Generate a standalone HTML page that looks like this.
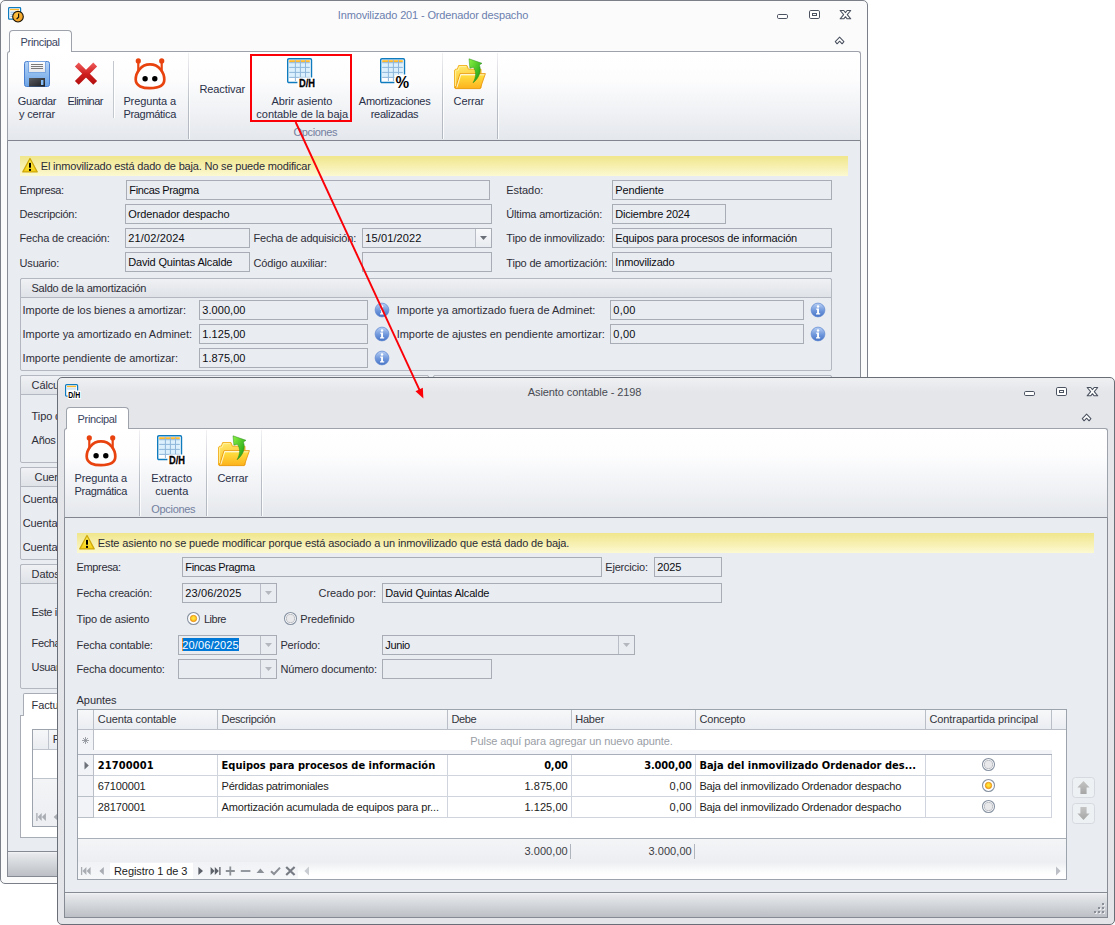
<!DOCTYPE html>
<html lang="es"><head><meta charset="utf-8"><title>Inmovilizado 201 - Ordenador despacho</title>
<style>
html,body{margin:0;padding:0;background:#fff;}
body{width:1115px;height:925px;position:relative;overflow:hidden;font-family:"Liberation Sans", sans-serif;font-size:11px;color:#222;}
.b{position:absolute;box-sizing:border-box;}
.t{position:absolute;white-space:pre;line-height:13px;height:13px;}
.tb{font-family:"DejaVu Sans Condensed", "Liberation Sans", sans-serif;font-weight:bold;}
svg{position:absolute;overflow:visible;}
</style></head><body>
<section id="win-inmovilizado" aria-label="Inmovilizado 201 - Ordenador despacho">
<div class="b" style="left:0px;top:0px;width:868px;height:884px;background:#fbfbfc;border:1px solid #7b8088;border-radius:5px;"></div>
<svg style="left:8px;top:7px" width="17" height="16" viewBox="0 0 17 16"><defs><radialGradient id="g1" cx="0.4" cy="0.35" r="0.7"><stop offset="0" stop-color="#ffc648"/><stop offset="1" stop-color="#f09a1c"/></radialGradient></defs>
<rect x="0.6" y="0.6" width="12" height="11.6" rx="0.8" fill="#fff" stroke="#0f7bbf" stroke-width="1.2"/>
<rect x="2" y="1.9" width="9.2" height="1.3" fill="#fdb92c"/><path d="M2.4 5.2H8M2.4 7.2H6M2.4 9.3H5" stroke="#7fb2e4" stroke-width="1"/>
<circle cx="10" cy="9.7" r="5.3" fill="url(#g1)" stroke="#1a1408" stroke-width="1.1"/>
<path d="M10.6 6.4V10.2L8.6 12" stroke="#1a1408" stroke-width="1.2" fill="none"/></svg>
<span class="t" style="left:337.80px;top:9px;letter-spacing:-0.143px;color:#6b7fae;">Inmovilizado 201 - Ordenador despacho</span>
<svg style="left:777px;top:10px" width="76" height="36" viewBox="0 0 76 36"><g fill="#fff" stroke="#4b5260" stroke-width="1">
<rect x="0.5" y="4.5" width="10" height="4" rx="1.2"/>
<rect x="32.5" y="0.5" width="10" height="8" rx="1.3"/><rect x="35.5" y="3.5" width="4" height="2"/></g>
<path d="M63.15 0.50L66.75 0.50L68.45 2.60L70.15 0.50L73.75 0.50L70.25 4.65L73.75 8.80L70.15 8.80L68.45 6.70L66.75 8.80L63.15 8.80L66.65 4.65Z" fill="#fff" stroke="#4b5260" stroke-width="1.05" stroke-linejoin="round"/>
<path d="M58.30 31.60L62.60 27.10L66.90 31.60L65.10 33.80L62.60 31.20L60.10 33.80Z" fill="#fff" stroke="#4b5260" stroke-width="1.05" stroke-linejoin="round"/></svg>
<div class="b" style="left:7px;top:51px;width:854px;height:90px;background:linear-gradient(#ffffff 0%,#fdfdfe 30%,#eff1f4 70%,#e4e7ec 100%);border:1px solid #9da2ab;border-radius:3px 3px 0 0;border-bottom-color:#80858e;"></div>
<div class="b" style="left:7px;top:141px;width:854px;height:710px;background:#e9ecf1;border:1px solid #878c95;border-top:none;border-bottom:none;"></div>
<div class="b" style="left:9px;top:30px;width:63px;height:22px;background:linear-gradient(#fdfdfe,#ffffff);border:1px solid #9da2ab;border-radius:4px 4px 0 0;border-bottom:none;"></div>
<span class="t" style="left:20.60px;top:36px;letter-spacing:-0.354px;color:#3a4560;">Principal</span>
<div class="b" style="left:7px;top:851px;width:854px;height:26px;background:linear-gradient(#f3f4f6 0px,#e6e8eb 2px,#d5d8dc 45%,#bcc0c6 100%);border:1px solid #858a93;"></div>
<svg style="left:24px;top:61px" width="26" height="26" viewBox="0 0 26 26"><defs><linearGradient id="g2" x1="0" y1="0" x2="0" y2="1"><stop offset="0" stop-color="#b4d3f6"/><stop offset="1" stop-color="#6ba3e6"/></linearGradient>
<linearGradient id="g3" x1="0" y1="0" x2="0" y2="1"><stop offset="0" stop-color="#ffffff"/><stop offset="1" stop-color="#e4e6ea"/></linearGradient>
<linearGradient id="g4" x1="0" y1="0" x2="1" y2="1"><stop offset="0" stop-color="#5a5d63"/><stop offset="1" stop-color="#1d1e21"/></linearGradient></defs>
<rect x="0.5" y="0.5" width="25" height="25" rx="2" fill="url(#g2)" stroke="#4a80cf"/>
<rect x="4.5" y="0.5" width="17" height="11" fill="url(#g3)" stroke="#7aa6e2"/>
<path d="M7 3.5H19M7 5.5H19M7 7.5H19" stroke="#5a5a5a" stroke-width="0.8"/>
<rect x="5" y="17" width="16" height="8.6" fill="url(#g4)"/>
<rect x="17" y="19" width="2.4" height="5" fill="#86bdf7"/></svg>
<span class="t" style="left:17.75px;top:95px;letter-spacing:-0.266px;color:#2a3048;">Guardar</span>
<span class="t" style="left:19.00px;top:108px;letter-spacing:-0.160px;color:#2a3048;">y cerrar</span>
<svg style="left:75px;top:63px" width="22" height="22" viewBox="0 0 22 22"><defs><linearGradient id="g5" gradientUnits="userSpaceOnUse" x1="0" y1="0" x2="0" y2="22"><stop offset="0" stop-color="#ee5a5a"/><stop offset="0.5" stop-color="#cf1f1f"/><stop offset="1" stop-color="#b00d0d"/></linearGradient></defs>
<path d="M1.8 1.5L20.2 19.9M20.2 1.5L1.8 19.9" stroke="url(#g5)" stroke-width="5.4" fill="none"/></svg>
<span class="t" style="left:67.60px;top:95px;letter-spacing:-0.567px;color:#2a3048;">Eliminar</span>
<div class="b" style="left:113px;top:61px;width:1px;height:57px;background:#c3c7ce;"></div>
<div class="b" style="left:114px;top:61px;width:1px;height:57px;background:#ffffff;"></div>
<svg style="left:134px;top:58px" width="32" height="32" viewBox="0 0 32 32"><g fill="none" stroke="#e8430f" stroke-width="2.7">
<path d="M16 6.4C25 6.4 30.3 14.5 30.3 21.6C30.3 28.3 23 30.2 16 30.2C9 30.2 1.7 28.3 1.7 21.6C1.7 14.5 7 6.4 16 6.4Z" fill="#fff"/>
<path d="M4.3 3.2V13.5M27.7 3.2V13.5" stroke-width="2.2"/></g>
<circle cx="4.3" cy="2.9" r="2.6" fill="#e8430f"/><circle cx="27.7" cy="2.9" r="2.6" fill="#e8430f"/>
<circle cx="11.1" cy="20.8" r="2.7" fill="#000"/><circle cx="20.8" cy="20.8" r="2.7" fill="#000"/></svg>
<span class="t" style="left:123.40px;top:95px;letter-spacing:-0.123px;color:#2a3048;">Pregunta a</span>
<span class="t" style="left:123.40px;top:108px;letter-spacing:-0.304px;color:#2a3048;">Pragmática</span>
<div class="b" style="left:188px;top:53px;width:1px;height:86px;background:linear-gradient(rgba(160,165,175,0.15),#b9bdc5 60%,#b3b7bf);"></div>
<div class="b" style="left:189px;top:53px;width:1px;height:86px;background:rgba(255,255,255,0.8);"></div>
<span class="t" style="left:199.40px;top:83px;letter-spacing:-0.097px;color:#2a3048;">Reactivar</span>
<svg style="left:287px;top:58px" width="32" height="32" viewBox="0 0 32 32"><rect x="0.7" y="0.7" width="23.8" height="23.8" rx="1.2" fill="#fff" stroke="#0f7bbf" stroke-width="1.4"/>
<rect x="2.2" y="4.4" width="20.6" height="14.8" fill="#dbf0fc"/>
<rect x="2.2" y="2.2" width="20.6" height="2" fill="#fdb92c"/>
<path d="M8.4 2.2V23M13.4 2.2V23M18.5 2.2V23M2.2 4.7H22.8M2.2 9.4H22.8M2.2 14.4H22.8M2.2 19.4H22.8" stroke="#8fb6da" stroke-width="1" fill="none"/><rect x="10.4" y="19.6" width="19" height="11" rx="2.5" fill="#fff"/>
<text x="12" y="29.2" font-family="Liberation Sans, sans-serif" font-weight="bold" font-size="11.6" textLength="16" lengthAdjust="spacingAndGlyphs" fill="#000" stroke="#000" stroke-width="0.3">D/H</text></svg>
<span class="t" style="left:271.40px;top:95px;letter-spacing:-0.059px;color:#2a3048;">Abrir asiento</span>
<span class="t" style="left:256.35px;top:108px;letter-spacing:-0.035px;color:#2a3048;">contable de la baja</span>
<svg style="left:380px;top:58px" width="32" height="32" viewBox="0 0 32 32"><rect x="0.7" y="0.7" width="23.8" height="23.8" rx="1.2" fill="#fff" stroke="#0f7bbf" stroke-width="1.4"/>
<rect x="2.2" y="4.4" width="20.6" height="14.8" fill="#dbf0fc"/>
<rect x="2.2" y="2.2" width="20.6" height="2" fill="#fdb92c"/>
<path d="M8.4 2.2V23M13.4 2.2V23M18.5 2.2V23M2.2 4.7H22.8M2.2 9.4H22.8M2.2 14.4H22.8M2.2 19.4H22.8" stroke="#8fb6da" stroke-width="1" fill="none"/><rect x="14.4" y="16.4" width="16" height="15" rx="3" fill="#fff"/>
<text x="15.6" y="29.8" font-family="Liberation Sans, sans-serif" font-weight="bold" font-size="16.5" textLength="13.6" lengthAdjust="spacingAndGlyphs" fill="#000">%</text></svg>
<span class="t" style="left:358.80px;top:95px;letter-spacing:-0.257px;color:#2a3048;">Amortizaciones</span>
<span class="t" style="left:370.65px;top:108px;letter-spacing:-0.244px;color:#2a3048;">realizadas</span>
<span class="t" style="left:293.55px;top:126px;letter-spacing:-0.348px;color:#7380a0;">Opciones</span>
<div class="b" style="left:442px;top:53px;width:1px;height:86px;background:linear-gradient(rgba(160,165,175,0.15),#b9bdc5 60%,#b3b7bf);"></div>
<div class="b" style="left:443px;top:53px;width:1px;height:86px;background:rgba(255,255,255,0.8);"></div>
<svg style="left:454px;top:58px" width="33" height="32" viewBox="0 0 33 32"><defs><linearGradient id="g6" x1="0" y1="0" x2="0.3" y2="1"><stop offset="0" stop-color="#ffec72"/><stop offset="1" stop-color="#fdbb1e"/></linearGradient>
<linearGradient id="g7" x1="0" y1="0" x2="0" y2="1"><stop offset="0" stop-color="#fff8cc"/><stop offset="0.18" stop-color="#ffdb3e"/><stop offset="1" stop-color="#fdb21c"/></linearGradient>
<linearGradient id="g8" x1="0" y1="0" x2="1" y2="1"><stop offset="0" stop-color="#8cf242"/><stop offset="0.6" stop-color="#3cba22"/><stop offset="1" stop-color="#15720e"/></linearGradient></defs>
<path d="M0.6 30V12.2L1.6 11.2H3.4L4.6 7.6H13L14.4 11.2H27V30Z" fill="url(#g6)" stroke="#f0a80f" stroke-width="0.9"/>
<path d="M1.4 30.6L6 15.6H31.4L26.2 30.6Z" fill="url(#g7)" stroke="#ea9a10" stroke-width="0.9"/>
<path d="M2.8 29.6L6.8 16.6H24" fill="none" stroke="#fffbe0" stroke-width="0.9"/><path d="M1.6 28V12.8L2.4 12.2H4.2L5.4 8.6H12.2" fill="none" stroke="#fff6b0" stroke-width="0.8"/>
<path d="M15 0.8L28 5.3L25.4 6.9C27.6 12.5 25.5 20 19 24.8C22.2 19 22.6 13.2 19.2 9.2L15.9 10.2Z" fill="url(#g8)" stroke="#2c8a1c" stroke-width="0.5"/></svg>
<span class="t" style="left:453.55px;top:95px;letter-spacing:-0.112px;color:#2a3048;">Cerrar</span>
<div class="b" style="left:497px;top:53px;width:1px;height:86px;background:linear-gradient(rgba(160,165,175,0.15),#b9bdc5 60%,#b3b7bf);"></div>
<div class="b" style="left:498px;top:53px;width:1px;height:86px;background:rgba(255,255,255,0.8);"></div>
<div class="b" style="left:250px;top:54px;width:102px;height:68px;border:2px solid #fb0007;"></div>
<div class="b" style="left:20px;top:156px;width:828px;height:20px;background:linear-gradient(#f0e68c,#f6efae 50%,#fcf9d2);"></div>
<svg style="left:22px;top:157px" width="16" height="16" viewBox="0 0 16 16"><defs><linearGradient id="g9" x1="0" y1="0" x2="0" y2="1"><stop offset="0" stop-color="#fff562"/><stop offset="1" stop-color="#f6cf12"/></linearGradient></defs>
<path d="M8 1.5L15.2 14.9H0.8Z" fill="url(#g9)" stroke="#cfa80a" stroke-width="1.3" stroke-linejoin="round"/>
<rect x="7" y="5.9" width="2" height="4.8" fill="#000"/><rect x="7" y="11.9" width="2" height="2" fill="#000"/></svg>
<span class="t" style="left:40.80px;top:160px;letter-spacing:-0.180px;color:#2b2b36;">El inmovilizado está dado de baja. No se puede modificar</span>
<span class="t" style="left:19.60px;top:184px;letter-spacing:-0.372px;color:#2e2e38;">Empresa:</span>
<div class="b" style="left:126px;top:180px;width:364px;height:20px;background:#e9ecf1;border:1px solid #a7acb5;"></div>
<span class="t" style="left:129.30px;top:184px;letter-spacing:-0.353px;color:#0c0c12;">Fincas Pragma</span>
<span class="t" style="left:19.60px;top:208px;letter-spacing:-0.261px;color:#2e2e38;">Descripción:</span>
<div class="b" style="left:125px;top:204px;width:367px;height:20px;background:#e9ecf1;border:1px solid #a7acb5;"></div>
<span class="t" style="left:128.30px;top:208px;letter-spacing:-0.120px;color:#0c0c12;">Ordenador despacho</span>
<span class="t" style="left:19.60px;top:232px;letter-spacing:-0.198px;color:#2e2e38;">Fecha de creación:</span>
<div class="b" style="left:125px;top:228px;width:125px;height:20px;background:#e9ecf1;border:1px solid #a7acb5;"></div>
<span class="t" style="left:128.30px;top:232px;letter-spacing:0.154px;color:#0c0c12;">21/02/2024</span>
<span class="t" style="left:253.50px;top:232px;letter-spacing:-0.215px;color:#2e2e38;">Fecha de adquisición:</span>
<div class="b" style="left:362px;top:228px;width:130px;height:20px;background:#e9ecf1;border:1px solid #a7acb5;"></div>
<div class="b" style="left:476px;top:229px;width:15px;height:18px;background:linear-gradient(#f8f9fb,#e8ebef);"></div>
<div class="b" style="left:475px;top:229px;width:1px;height:18px;background:#b9bec6;"></div>
<svg style="left:480px;top:236px" width="7" height="4" viewBox="0 0 7 4"><path d="M0 0H7L3.5 4Z" fill="#6b6f77"/></svg>
<span class="t" style="left:365.30px;top:232px;letter-spacing:0.114px;color:#0c0c12;">15/01/2022</span>
<span class="t" style="left:19.60px;top:257px;letter-spacing:-0.196px;color:#2e2e38;">Usuario:</span>
<div class="b" style="left:125px;top:252px;width:125px;height:20px;background:#e9ecf1;border:1px solid #a7acb5;"></div>
<span class="t" style="left:128.30px;top:256px;letter-spacing:-0.173px;color:#0c0c12;">David Quintas Alcalde</span>
<span class="t" style="left:253.50px;top:257px;letter-spacing:-0.146px;color:#2e2e38;">Código auxiliar:</span>
<div class="b" style="left:362px;top:252px;width:130px;height:20px;background:#e9ecf1;border:1px solid #a7acb5;"></div>
<span class="t" style="left:506.30px;top:184px;letter-spacing:-0.059px;color:#2e2e38;">Estado:</span>
<div class="b" style="left:612px;top:180px;width:220px;height:20px;background:#e9ecf1;border:1px solid #a7acb5;"></div>
<span class="t" style="left:615.30px;top:184px;letter-spacing:-0.127px;color:#0c0c12;">Pendiente</span>
<span class="t" style="left:506.30px;top:208px;letter-spacing:-0.197px;color:#2e2e38;">Última amortización:</span>
<div class="b" style="left:612px;top:204px;width:114px;height:20px;background:#e9ecf1;border:1px solid #a7acb5;"></div>
<span class="t" style="left:615.30px;top:208px;letter-spacing:-0.189px;color:#0c0c12;">Diciembre 2024</span>
<span class="t" style="left:506.30px;top:232px;letter-spacing:-0.206px;color:#2e2e38;">Tipo de inmovilizado:</span>
<div class="b" style="left:612px;top:228px;width:220px;height:20px;background:#e9ecf1;border:1px solid #a7acb5;"></div>
<span class="t" style="left:615.30px;top:232px;letter-spacing:-0.165px;color:#0c0c12;">Equipos para procesos de información</span>
<span class="t" style="left:506.30px;top:257px;letter-spacing:-0.184px;color:#2e2e38;">Tipo de amortización:</span>
<div class="b" style="left:612px;top:252px;width:220px;height:20px;background:#e9ecf1;border:1px solid #a7acb5;"></div>
<span class="t" style="left:615.30px;top:256px;letter-spacing:-0.162px;color:#0c0c12;">Inmovilizado</span>
<div class="b" style="left:20px;top:278px;width:812px;height:93px;background:#e9ecf1;border:1px solid #b3b8c0;border-radius:2px;"></div>
<div class="b" style="left:20px;top:278px;width:812px;height:20px;background:linear-gradient(#eff1f4,#dfe2e7);border:1px solid #b3b8c0;border-radius:2px 2px 0 0;"></div>
<span class="t" style="left:31.50px;top:282px;letter-spacing:-0.240px;color:#2e2e38;">Saldo de la amortización</span>
<span class="t" style="left:22.60px;top:304px;letter-spacing:-0.089px;color:#2e2e38;">Importe de los bienes a amortizar:</span>
<div class="b" style="left:199px;top:300px;width:169px;height:20px;background:#e9ecf1;border:1px solid #a7acb5;"></div>
<span class="t" style="left:202.30px;top:304px;letter-spacing:0.046px;color:#0c0c12;">3.000,00</span>
<span class="t" style="left:22.60px;top:328px;letter-spacing:-0.036px;color:#2e2e38;">Importe ya amortizado en Adminet:</span>
<div class="b" style="left:199px;top:324px;width:169px;height:20px;background:#e9ecf1;border:1px solid #a7acb5;"></div>
<span class="t" style="left:202.30px;top:328px;letter-spacing:0.046px;color:#0c0c12;">1.125,00</span>
<span class="t" style="left:22.60px;top:352px;letter-spacing:-0.017px;color:#2e2e38;">Importe pendiente de amortizar:</span>
<div class="b" style="left:199px;top:348px;width:169px;height:20px;background:#e9ecf1;border:1px solid #a7acb5;"></div>
<span class="t" style="left:202.30px;top:352px;letter-spacing:0.046px;color:#0c0c12;">1.875,00</span>
<svg style="left:374px;top:302px" width="16" height="16" viewBox="0 0 16 16"><defs><linearGradient id="g10" x1="0" y1="0" x2="0" y2="1"><stop offset="0" stop-color="#b9d0f4"/><stop offset="0.55" stop-color="#6f97dc"/><stop offset="1" stop-color="#4673c6"/></linearGradient></defs>
<circle cx="8" cy="8" r="6.9" fill="url(#g10)" stroke="#5f86d0" stroke-width="0.7"/>
<circle cx="8" cy="4.4" r="1.25" fill="#fff"/><path d="M6.2 6.6H9V11.2H10.2V12.4H6V11.2H7.1V7.8H6.2Z" fill="#fff"/></svg>
<svg style="left:374px;top:326px" width="16" height="16" viewBox="0 0 16 16"><defs><linearGradient id="g11" x1="0" y1="0" x2="0" y2="1"><stop offset="0" stop-color="#b9d0f4"/><stop offset="0.55" stop-color="#6f97dc"/><stop offset="1" stop-color="#4673c6"/></linearGradient></defs>
<circle cx="8" cy="8" r="6.9" fill="url(#g11)" stroke="#5f86d0" stroke-width="0.7"/>
<circle cx="8" cy="4.4" r="1.25" fill="#fff"/><path d="M6.2 6.6H9V11.2H10.2V12.4H6V11.2H7.1V7.8H6.2Z" fill="#fff"/></svg>
<svg style="left:374px;top:350px" width="16" height="16" viewBox="0 0 16 16"><defs><linearGradient id="g12" x1="0" y1="0" x2="0" y2="1"><stop offset="0" stop-color="#b9d0f4"/><stop offset="0.55" stop-color="#6f97dc"/><stop offset="1" stop-color="#4673c6"/></linearGradient></defs>
<circle cx="8" cy="8" r="6.9" fill="url(#g12)" stroke="#5f86d0" stroke-width="0.7"/>
<circle cx="8" cy="4.4" r="1.25" fill="#fff"/><path d="M6.2 6.6H9V11.2H10.2V12.4H6V11.2H7.1V7.8H6.2Z" fill="#fff"/></svg>
<span class="t" style="left:396.70px;top:304px;color:#2e2e38;">Importe ya amortizado fuera de Adminet:</span>
<div class="b" style="left:610px;top:300px;width:194px;height:20px;background:#e9ecf1;border:1px solid #a7acb5;"></div>
<span class="t" style="left:613.30px;top:304px;letter-spacing:0.220px;color:#0c0c12;">0,00</span>
<span class="t" style="left:396.70px;top:328px;letter-spacing:-0.024px;color:#2e2e38;">Importe de ajustes en pendiente amortizar:</span>
<div class="b" style="left:610px;top:324px;width:194px;height:20px;background:#e9ecf1;border:1px solid #a7acb5;"></div>
<span class="t" style="left:613.30px;top:328px;letter-spacing:0.220px;color:#0c0c12;">0,00</span>
<svg style="left:810px;top:302px" width="16" height="16" viewBox="0 0 16 16"><defs><linearGradient id="g13" x1="0" y1="0" x2="0" y2="1"><stop offset="0" stop-color="#b9d0f4"/><stop offset="0.55" stop-color="#6f97dc"/><stop offset="1" stop-color="#4673c6"/></linearGradient></defs>
<circle cx="8" cy="8" r="6.9" fill="url(#g13)" stroke="#5f86d0" stroke-width="0.7"/>
<circle cx="8" cy="4.4" r="1.25" fill="#fff"/><path d="M6.2 6.6H9V11.2H10.2V12.4H6V11.2H7.1V7.8H6.2Z" fill="#fff"/></svg>
<svg style="left:810px;top:326px" width="16" height="16" viewBox="0 0 16 16"><defs><linearGradient id="g14" x1="0" y1="0" x2="0" y2="1"><stop offset="0" stop-color="#b9d0f4"/><stop offset="0.55" stop-color="#6f97dc"/><stop offset="1" stop-color="#4673c6"/></linearGradient></defs>
<circle cx="8" cy="8" r="6.9" fill="url(#g14)" stroke="#5f86d0" stroke-width="0.7"/>
<circle cx="8" cy="4.4" r="1.25" fill="#fff"/><path d="M6.2 6.6H9V11.2H10.2V12.4H6V11.2H7.1V7.8H6.2Z" fill="#fff"/></svg>
<div class="b" style="left:20px;top:375px;width:409px;height:88px;background:#e9ecf1;border:1px solid #b3b8c0;border-radius:2px;"></div>
<div class="b" style="left:20px;top:375px;width:409px;height:20px;background:linear-gradient(#eff1f4,#dfe2e7);border:1px solid #b3b8c0;border-radius:2px 2px 0 0;"></div>
<span class="t" style="left:31.60px;top:379px;letter-spacing:-0.124px;color:#2e2e38;">Cálcu</span>
<div class="b" style="left:433px;top:375px;width:399px;height:88px;background:#e9ecf1;border:1px solid #b3b8c0;border-radius:2px;"></div>
<div class="b" style="left:433px;top:375px;width:399px;height:20px;background:linear-gradient(#eff1f4,#dfe2e7);border:1px solid #b3b8c0;border-radius:2px 2px 0 0;"></div>
<span class="t" style="left:31.60px;top:410px;letter-spacing:-0.111px;color:#2e2e38;">Tipo d</span>
<span class="t" style="left:31.60px;top:434px;letter-spacing:-0.270px;color:#2e2e38;">Años</span>
<div class="b" style="left:20px;top:467px;width:812px;height:93px;background:#e9ecf1;border:1px solid #b3b8c0;border-radius:2px;"></div>
<div class="b" style="left:20px;top:467px;width:812px;height:20px;background:linear-gradient(#eff1f4,#dfe2e7);border:1px solid #b3b8c0;border-radius:2px 2px 0 0;"></div>
<span class="t" style="left:34.60px;top:471px;letter-spacing:-0.145px;color:#2e2e38;">Cuen</span>
<span class="t" style="left:22.70px;top:493px;letter-spacing:-0.130px;color:#2e2e38;">Cuenta</span>
<span class="t" style="left:22.70px;top:517px;letter-spacing:-0.130px;color:#2e2e38;">Cuenta</span>
<span class="t" style="left:22.70px;top:541px;letter-spacing:-0.130px;color:#2e2e38;">Cuenta</span>
<div class="b" style="left:20px;top:564px;width:812px;height:125px;background:#e9ecf1;border:1px solid #b3b8c0;border-radius:2px;"></div>
<div class="b" style="left:20px;top:564px;width:812px;height:20px;background:linear-gradient(#eff1f4,#dfe2e7);border:1px solid #b3b8c0;border-radius:2px 2px 0 0;"></div>
<span class="t" style="left:31.60px;top:568px;letter-spacing:-0.127px;color:#2e2e38;">Datos</span>
<span class="t" style="left:31.60px;top:606px;letter-spacing:-0.386px;color:#2e2e38;">Este i</span>
<span class="t" style="left:31.60px;top:637px;letter-spacing:-0.396px;color:#2e2e38;">Fecha</span>
<span class="t" style="left:31.60px;top:661px;letter-spacing:-0.349px;color:#2e2e38;">Usuar</span>
<div class="b" style="left:20px;top:715px;width:812px;height:123px;background:#fff;border:1px solid #a7acb5;"></div>
<div class="b" style="left:23px;top:693px;width:60px;height:23px;background:#fff;border:1px solid #a7acb5;border-radius:2px 2px 0 0;border-bottom:none;"></div>
<span class="t" style="left:31.60px;top:699px;letter-spacing:-0.121px;color:#2e2e38;">Factu</span>
<div class="b" style="left:32px;top:729px;width:790px;height:98px;background:#fff;border:1px solid #9da3ac;"></div>
<div class="b" style="left:33px;top:730px;width:788px;height:20px;background:linear-gradient(#f6f7f9,#e9ecf0);border-bottom:1px solid #bfc4cc;"></div>
<div class="b" style="left:48px;top:730px;width:1px;height:19px;background:#bfc4cc;"></div>
<span class="t" style="left:52.70px;top:733px;letter-spacing:-0.162px;color:#2e2e38;">P</span>
<div class="b" style="left:33px;top:778px;width:788px;height:48px;background:linear-gradient(#f2f4f6,#eceef2);border-top:1px solid #bfc4cc;"></div>
<svg style="left:36px;top:812px" width="22" height="10" viewBox="0 0 22 10"><path d="M0.9 1V9" stroke="#a9adb3" stroke-width="1.3"/><path d="M5.7 1V9L1.7 5ZM9.9 1V9L5.9 5Z" fill="#a9adb3"/><path d="M22 1V9L17.6 5Z" fill="#a9adb3"/></svg>
</section>
<section id="win-asiento" aria-label="Asiento contable - 2198">
<div class="b" style="left:57px;top:377px;width:1058px;height:548px;background:linear-gradient(#eef0f2 0px,#e4e6ea 14px,#e3e5e9 100%);border:1px solid #6a6f77;border-radius:5px;"></div>
<svg style="left:65px;top:384px" width="17" height="16" viewBox="0 0 17 16"><rect x="0.6" y="0.6" width="12" height="11.6" rx="1" fill="#fff" stroke="#0f7bbf" stroke-width="1.2"/>
<rect x="2" y="1.8" width="9.2" height="1.4" fill="#fdb92c"/><rect x="2" y="3.6" width="9.2" height="2.2" fill="#cfe6f8"/>
<rect x="2.6" y="6.6" width="13.4" height="8.6" rx="1.5" fill="#fff"/>
<text x="3.2" y="14.4" font-family="Liberation Sans, sans-serif" font-weight="bold" font-size="8.6" textLength="12" lengthAdjust="spacingAndGlyphs" fill="#000">D/H</text></svg>
<span class="t" style="left:527.80px;top:386px;letter-spacing:-0.091px;color:#484b52;">Asiento contable - 2198</span>
<svg style="left:1024px;top:387px" width="76" height="36" viewBox="0 0 76 36"><g fill="#fff" stroke="#4b5260" stroke-width="1">
<rect x="0.5" y="4.5" width="10" height="4" rx="1.2"/>
<rect x="32.5" y="0.5" width="10" height="8" rx="1.3"/><rect x="35.5" y="3.5" width="4" height="2"/></g>
<path d="M63.15 0.50L66.75 0.50L68.45 2.60L70.15 0.50L73.75 0.50L70.25 4.65L73.75 8.80L70.15 8.80L68.45 6.70L66.75 8.80L63.15 8.80L66.65 4.65Z" fill="#fff" stroke="#4b5260" stroke-width="1.05" stroke-linejoin="round"/>
<path d="M58.30 31.60L62.60 27.10L66.90 31.60L65.10 33.80L62.60 31.20L60.10 33.80Z" fill="#fff" stroke="#4b5260" stroke-width="1.05" stroke-linejoin="round"/></svg>
<div class="b" style="left:64px;top:428px;width:1044px;height:90px;background:linear-gradient(#ffffff 0%,#fdfdfe 30%,#eff1f4 70%,#e4e7ec 100%);border:1px solid #9da2ab;border-radius:3px 3px 0 0;border-bottom-color:#80858e;"></div>
<div class="b" style="left:64px;top:518px;width:1044px;height:374px;background:#e9ecf1;border:1px solid #878c95;border-top:none;border-bottom:none;"></div>
<div class="b" style="left:66px;top:407px;width:63px;height:22px;background:#fff;border:1px solid #9da2ab;border-radius:4px 4px 0 0;border-bottom:none;"></div>
<span class="t" style="left:77.60px;top:413px;letter-spacing:-0.354px;color:#3a4560;">Principal</span>
<div class="b" style="left:64px;top:892px;width:1044px;height:26px;background:linear-gradient(#f3f4f6 0px,#e6e8eb 2px,#d5d8dc 45%,#bcc0c6 100%);border:1px solid #858a93;"></div>
<svg style="left:85px;top:435px" width="32" height="32" viewBox="0 0 32 32"><g fill="none" stroke="#e8430f" stroke-width="2.7">
<path d="M16 6.4C25 6.4 30.3 14.5 30.3 21.6C30.3 28.3 23 30.2 16 30.2C9 30.2 1.7 28.3 1.7 21.6C1.7 14.5 7 6.4 16 6.4Z" fill="#fff"/>
<path d="M4.3 3.2V13.5M27.7 3.2V13.5" stroke-width="2.2"/></g>
<circle cx="4.3" cy="2.9" r="2.6" fill="#e8430f"/><circle cx="27.7" cy="2.9" r="2.6" fill="#e8430f"/>
<circle cx="11.1" cy="20.8" r="2.7" fill="#000"/><circle cx="20.8" cy="20.8" r="2.7" fill="#000"/></svg>
<span class="t" style="left:74.50px;top:472px;letter-spacing:-0.123px;color:#2a3048;">Pregunta a</span>
<span class="t" style="left:74.50px;top:485px;letter-spacing:-0.304px;color:#2a3048;">Pragmática</span>
<div class="b" style="left:139px;top:430px;width:1px;height:86px;background:linear-gradient(rgba(160,165,175,0.15),#b9bdc5 60%,#b3b7bf);"></div>
<div class="b" style="left:140px;top:430px;width:1px;height:86px;background:rgba(255,255,255,0.8);"></div>
<svg style="left:157px;top:435px" width="32" height="32" viewBox="0 0 32 32"><rect x="0.7" y="0.7" width="23.8" height="23.8" rx="1.2" fill="#fff" stroke="#0f7bbf" stroke-width="1.4"/>
<rect x="2.2" y="4.4" width="20.6" height="14.8" fill="#dbf0fc"/>
<rect x="2.2" y="2.2" width="20.6" height="2" fill="#fdb92c"/>
<path d="M8.4 2.2V23M13.4 2.2V23M18.5 2.2V23M2.2 4.7H22.8M2.2 9.4H22.8M2.2 14.4H22.8M2.2 19.4H22.8" stroke="#8fb6da" stroke-width="1" fill="none"/><rect x="10.4" y="19.6" width="19" height="11" rx="2.5" fill="#fff"/>
<text x="12" y="29.2" font-family="Liberation Sans, sans-serif" font-weight="bold" font-size="11.6" textLength="16" lengthAdjust="spacingAndGlyphs" fill="#000" stroke="#000" stroke-width="0.3">D/H</text></svg>
<span class="t" style="left:151.35px;top:472px;letter-spacing:0.068px;color:#2a3048;">Extracto</span>
<span class="t" style="left:155.35px;top:485px;letter-spacing:-0.022px;color:#2a3048;">cuenta</span>
<span class="t" style="left:151.35px;top:503px;letter-spacing:-0.323px;color:#7380a0;">Opciones</span>
<div class="b" style="left:206px;top:430px;width:1px;height:86px;background:linear-gradient(rgba(160,165,175,0.15),#b9bdc5 60%,#b3b7bf);"></div>
<div class="b" style="left:207px;top:430px;width:1px;height:86px;background:rgba(255,255,255,0.8);"></div>
<svg style="left:217.5px;top:435px" width="33" height="32" viewBox="0 0 33 32"><defs><linearGradient id="g15" x1="0" y1="0" x2="0.3" y2="1"><stop offset="0" stop-color="#ffec72"/><stop offset="1" stop-color="#fdbb1e"/></linearGradient>
<linearGradient id="g16" x1="0" y1="0" x2="0" y2="1"><stop offset="0" stop-color="#fff8cc"/><stop offset="0.18" stop-color="#ffdb3e"/><stop offset="1" stop-color="#fdb21c"/></linearGradient>
<linearGradient id="g17" x1="0" y1="0" x2="1" y2="1"><stop offset="0" stop-color="#8cf242"/><stop offset="0.6" stop-color="#3cba22"/><stop offset="1" stop-color="#15720e"/></linearGradient></defs>
<path d="M0.6 30V12.2L1.6 11.2H3.4L4.6 7.6H13L14.4 11.2H27V30Z" fill="url(#g15)" stroke="#f0a80f" stroke-width="0.9"/>
<path d="M1.4 30.6L6 15.6H31.4L26.2 30.6Z" fill="url(#g16)" stroke="#ea9a10" stroke-width="0.9"/>
<path d="M2.8 29.6L6.8 16.6H24" fill="none" stroke="#fffbe0" stroke-width="0.9"/><path d="M1.6 28V12.8L2.4 12.2H4.2L5.4 8.6H12.2" fill="none" stroke="#fff6b0" stroke-width="0.8"/>
<path d="M15 0.8L28 5.3L25.4 6.9C27.6 12.5 25.5 20 19 24.8C22.2 19 22.6 13.2 19.2 9.2L15.9 10.2Z" fill="url(#g17)" stroke="#2c8a1c" stroke-width="0.5"/></svg>
<span class="t" style="left:217.40px;top:472px;letter-spacing:-0.062px;color:#2a3048;">Cerrar</span>
<div class="b" style="left:261px;top:430px;width:1px;height:86px;background:linear-gradient(rgba(160,165,175,0.15),#b9bdc5 60%,#b3b7bf);"></div>
<div class="b" style="left:262px;top:430px;width:1px;height:86px;background:rgba(255,255,255,0.8);"></div>
<div class="b" style="left:77px;top:533px;width:1017px;height:20px;background:linear-gradient(#f0e68c,#f6efae 50%,#fcf9d2);"></div>
<svg style="left:79px;top:534px" width="16" height="16" viewBox="0 0 16 16"><defs><linearGradient id="g18" x1="0" y1="0" x2="0" y2="1"><stop offset="0" stop-color="#fff562"/><stop offset="1" stop-color="#f6cf12"/></linearGradient></defs>
<path d="M8 1.5L15.2 14.9H0.8Z" fill="url(#g18)" stroke="#cfa80a" stroke-width="1.3" stroke-linejoin="round"/>
<rect x="7" y="5.9" width="2" height="4.8" fill="#000"/><rect x="7" y="11.9" width="2" height="2" fill="#000"/></svg>
<span class="t" style="left:97.80px;top:537px;letter-spacing:-0.121px;color:#2b2b36;">Este asiento no se puede modificar porque está asociado a un inmovilizado que está dado de baja.</span>
<span class="t" style="left:76.60px;top:561px;letter-spacing:-0.372px;color:#2e2e38;">Empresa:</span>
<div class="b" style="left:182px;top:557px;width:420px;height:20px;background:#e9ecf1;border:1px solid #a7acb5;"></div>
<span class="t" style="left:185.30px;top:561px;letter-spacing:-0.353px;color:#0c0c12;">Fincas Pragma</span>
<span class="t" style="left:605.30px;top:561px;letter-spacing:-0.212px;color:#2e2e38;">Ejercicio:</span>
<div class="b" style="left:654px;top:557px;width:68px;height:20px;background:#e9ecf1;border:1px solid #a7acb5;"></div>
<span class="t" style="left:657.30px;top:561px;letter-spacing:-0.146px;color:#0c0c12;">2025</span>
<span class="t" style="left:76.60px;top:587px;letter-spacing:-0.184px;color:#2e2e38;">Fecha creación:</span>
<div class="b" style="left:182px;top:583px;width:95px;height:20px;background:#e9ecf1;border:1px solid #a7acb5;"></div>
<div class="b" style="left:260px;top:584px;width:1px;height:18px;background:#b9bec6;"></div>
<svg style="left:265px;top:591px" width="7" height="4" viewBox="0 0 7 4"><path d="M0 0H7L3.5 4Z" fill="#b4b8be"/></svg>
<span class="t" style="left:185.30px;top:587px;letter-spacing:0.114px;color:#0c0c12;">23/06/2025</span>
<span class="t" style="left:318.50px;top:587px;letter-spacing:-0.045px;color:#2e2e38;">Creado por:</span>
<div class="b" style="left:382px;top:583px;width:340px;height:20px;background:#e9ecf1;border:1px solid #a7acb5;"></div>
<span class="t" style="left:385.30px;top:587px;letter-spacing:-0.173px;color:#0c0c12;">David Quintas Alcalde</span>
<span class="t" style="left:76.60px;top:613px;letter-spacing:-0.154px;color:#2e2e38;">Tipo de asiento</span>
<svg style="left:187px;top:612px" width="13" height="13" viewBox="0 0 13 13"><circle cx="6.5" cy="6.5" r="6" fill="#fff" stroke="#8792a2" stroke-width="1.1"/><defs><radialGradient id="g19" cx="0.5" cy="0.45" r="0.55"><stop offset="0" stop-color="#ffec45"/><stop offset="0.55" stop-color="#fdd02a"/><stop offset="1" stop-color="#f39a16"/></radialGradient></defs>
<circle cx="6.5" cy="6.5" r="3.2" fill="url(#g19)" stroke="#e3921a" stroke-width="0.8"/></svg>
<span class="t" style="left:203.90px;top:613px;letter-spacing:-0.474px;color:#2e2e38;">Libre</span>
<svg style="left:284px;top:612px" width="13" height="13" viewBox="0 0 13 13"><circle cx="6.5" cy="6.5" r="6" fill="#fff" stroke="#8792a2" stroke-width="1.1"/><circle cx="6.5" cy="6.5" r="4.1" fill="#e9e9eb" stroke="#b3b7bd" stroke-width="0.9"/></svg>
<span class="t" style="left:300.30px;top:613px;letter-spacing:-0.141px;color:#2e2e38;">Predefinido</span>
<span class="t" style="left:76.60px;top:639px;letter-spacing:-0.139px;color:#2e2e38;">Fecha contable:</span>
<div class="b" style="left:178px;top:635px;width:99px;height:20px;background:#e9ecf1;border:1px solid #a7acb5;"></div>
<div class="b" style="left:260px;top:636px;width:1px;height:18px;background:#b9bec6;"></div>
<svg style="left:265px;top:643px" width="7" height="4" viewBox="0 0 7 4"><path d="M0 0H7L3.5 4Z" fill="#b4b8be"/></svg>
<div class="b" style="left:182px;top:638px;width:57px;height:13px;background:#0078d7;"></div>
<div class="b" style="left:182px;top:638px;width:1px;height:13px;background:#f08a24;"></div>
<span class="t" style="left:182.30px;top:639px;letter-spacing:0.134px;color:#fff;">20/06/2025</span>
<span class="t" style="left:280.50px;top:639px;letter-spacing:-0.262px;color:#2e2e38;">Período:</span>
<div class="b" style="left:382px;top:635px;width:253px;height:20px;background:#e9ecf1;border:1px solid #a7acb5;"></div>
<div class="b" style="left:618px;top:636px;width:1px;height:18px;background:#b9bec6;"></div>
<svg style="left:623px;top:643px" width="7" height="4" viewBox="0 0 7 4"><path d="M0 0H7L3.5 4Z" fill="#b4b8be"/></svg>
<span class="t" style="left:385.30px;top:639px;letter-spacing:-0.339px;color:#0c0c12;">Junio</span>
<span class="t" style="left:76.60px;top:663px;letter-spacing:-0.189px;color:#2e2e38;">Fecha documento:</span>
<div class="b" style="left:178px;top:659px;width:99px;height:20px;background:#e9ecf1;border:1px solid #a7acb5;"></div>
<div class="b" style="left:260px;top:660px;width:1px;height:18px;background:#b9bec6;"></div>
<svg style="left:265px;top:667px" width="7" height="4" viewBox="0 0 7 4"><path d="M0 0H7L3.5 4Z" fill="#b4b8be"/></svg>
<span class="t" style="left:280.50px;top:663px;letter-spacing:-0.198px;color:#2e2e38;">Número documento:</span>
<div class="b" style="left:382px;top:659px;width:110px;height:20px;background:#e9ecf1;border:1px solid #a7acb5;"></div>
<span class="t" style="left:76.60px;top:694px;letter-spacing:-0.068px;color:#2e2e38;">Apuntes</span>
<div class="b" style="left:77px;top:709px;width:990px;height:171px;background:#fff;border:1px solid #9da3ac;"></div>
<div class="b" style="left:78px;top:710px;width:988px;height:20px;background:linear-gradient(#f7f8fa,#eaedf1);border-bottom:1px solid #b9bec7;"></div>
<div class="b" style="left:93px;top:710px;width:1px;height:19px;background:#b9bec7;"></div>
<div class="b" style="left:217px;top:710px;width:1px;height:19px;background:#b9bec7;"></div>
<div class="b" style="left:447px;top:710px;width:1px;height:19px;background:#b9bec7;"></div>
<div class="b" style="left:571px;top:710px;width:1px;height:19px;background:#b9bec7;"></div>
<div class="b" style="left:695px;top:710px;width:1px;height:19px;background:#b9bec7;"></div>
<div class="b" style="left:925px;top:710px;width:1px;height:19px;background:#b9bec7;"></div>
<div class="b" style="left:1051px;top:710px;width:1px;height:19px;background:#b9bec7;"></div>
<span class="t" style="left:97.80px;top:713px;letter-spacing:-0.115px;color:#33343c;">Cuenta contable</span>
<span class="t" style="left:221.60px;top:713px;letter-spacing:-0.352px;color:#33343c;">Descripción</span>
<span class="t" style="left:451.50px;top:713px;letter-spacing:-0.424px;color:#33343c;">Debe</span>
<span class="t" style="left:575.20px;top:713px;letter-spacing:-0.194px;color:#33343c;">Haber</span>
<span class="t" style="left:699.40px;top:713px;letter-spacing:-0.162px;color:#33343c;">Concepto</span>
<span class="t" style="left:929.40px;top:713px;letter-spacing:-0.081px;color:#33343c;">Contrapartida principal</span>
<div class="b" style="left:78px;top:730px;width:16px;height:20px;background:#f1f3f6;border-right:1px solid #b9bec7;"></div>
<svg style="left:82px;top:737px" width="7" height="7" viewBox="0 0 7 7"><path d="M3.5 0V7M0 3.5H7M1 1L6 6M6 1L1 6" stroke="#8a8e96" stroke-width="0.8"/></svg>
<span class="t" style="left:470.25px;top:735px;letter-spacing:-0.090px;color:#9a9ea6;">Pulse aquí para agregar un nuevo apunte.</span>
<div class="b" style="left:78px;top:750px;width:974px;height:4px;background:#f3f4f7;"></div>
<div class="b" style="left:78px;top:754px;width:974px;height:1px;background:#a9afba;"></div>
<div class="b" style="left:78px;top:755px;width:16px;height:21px;background:#f1f3f6;border-right:1px solid #b9bec7;border-bottom:1px solid #b9bec7;"></div>
<div class="b" style="left:94px;top:775px;width:958px;height:1px;background:#d0d4dc;"></div>
<div class="b" style="left:217px;top:755px;width:1px;height:21px;background:#d0d4dc;"></div>
<div class="b" style="left:447px;top:755px;width:1px;height:21px;background:#d0d4dc;"></div>
<div class="b" style="left:571px;top:755px;width:1px;height:21px;background:#d0d4dc;"></div>
<div class="b" style="left:695px;top:755px;width:1px;height:21px;background:#d0d4dc;"></div>
<div class="b" style="left:925px;top:755px;width:1px;height:21px;background:#d0d4dc;"></div>
<div class="b" style="left:1051px;top:755px;width:1px;height:21px;background:#d0d4dc;"></div>
<span class="t tb" style="left:97.80px;top:759px;letter-spacing:0.113px;color:#000;">21700001</span>
<span class="t tb" style="left:221.60px;top:759px;letter-spacing:0.006px;color:#000;">Equipos para procesos de información</span>
<span class="t tb" style="left:544.20px;top:759px;letter-spacing:-0.205px;color:#000;">0,00</span>
<span class="t tb" style="left:644.30px;top:759px;letter-spacing:-0.168px;color:#000;">3.000,00</span>
<span class="t tb" style="left:699.40px;top:759px;letter-spacing:0.008px;color:#000;">Baja del inmovilizado Ordenador des...</span>
<svg style="left:982px;top:758px" width="13" height="13" viewBox="0 0 13 13"><circle cx="6.5" cy="6.5" r="6" fill="#fff" stroke="#8792a2" stroke-width="1.1"/><circle cx="6.5" cy="6.5" r="4.1" fill="#e9e9eb" stroke="#b3b7bd" stroke-width="0.9"/></svg>
<div class="b" style="left:78px;top:776px;width:16px;height:21px;background:#f1f3f6;border-right:1px solid #b9bec7;border-bottom:1px solid #b9bec7;"></div>
<div class="b" style="left:94px;top:796px;width:958px;height:1px;background:#d0d4dc;"></div>
<div class="b" style="left:217px;top:776px;width:1px;height:21px;background:#d0d4dc;"></div>
<div class="b" style="left:447px;top:776px;width:1px;height:21px;background:#d0d4dc;"></div>
<div class="b" style="left:571px;top:776px;width:1px;height:21px;background:#d0d4dc;"></div>
<div class="b" style="left:695px;top:776px;width:1px;height:21px;background:#d0d4dc;"></div>
<div class="b" style="left:925px;top:776px;width:1px;height:21px;background:#d0d4dc;"></div>
<div class="b" style="left:1051px;top:776px;width:1px;height:21px;background:#d0d4dc;"></div>
<span class="t" style="left:97.80px;top:780px;letter-spacing:-0.144px;color:#1c1c22;">67100001</span>
<span class="t" style="left:221.60px;top:780px;letter-spacing:-0.231px;color:#1c1c22;">Pérdidas patrimoniales</span>
<span class="t" style="left:524.40px;top:780px;letter-spacing:0.071px;color:#1c1c22;">1.875,00</span>
<span class="t" style="left:669.60px;top:780px;letter-spacing:0.195px;color:#1c1c22;">0,00</span>
<span class="t" style="left:699.40px;top:780px;letter-spacing:-0.199px;color:#1c1c22;">Baja del inmovilizado Ordenador despacho</span>
<svg style="left:982px;top:779px" width="13" height="13" viewBox="0 0 13 13"><circle cx="6.5" cy="6.5" r="6" fill="#fff" stroke="#8792a2" stroke-width="1.1"/><defs><radialGradient id="g22" cx="0.5" cy="0.45" r="0.55"><stop offset="0" stop-color="#ffec45"/><stop offset="0.55" stop-color="#fdd02a"/><stop offset="1" stop-color="#f39a16"/></radialGradient></defs>
<circle cx="6.5" cy="6.5" r="3.2" fill="url(#g22)" stroke="#e3921a" stroke-width="0.8"/></svg>
<div class="b" style="left:78px;top:797px;width:16px;height:21px;background:#f1f3f6;border-right:1px solid #b9bec7;border-bottom:1px solid #b9bec7;"></div>
<div class="b" style="left:94px;top:817px;width:958px;height:1px;background:#d0d4dc;"></div>
<div class="b" style="left:217px;top:797px;width:1px;height:21px;background:#d0d4dc;"></div>
<div class="b" style="left:447px;top:797px;width:1px;height:21px;background:#d0d4dc;"></div>
<div class="b" style="left:571px;top:797px;width:1px;height:21px;background:#d0d4dc;"></div>
<div class="b" style="left:695px;top:797px;width:1px;height:21px;background:#d0d4dc;"></div>
<div class="b" style="left:925px;top:797px;width:1px;height:21px;background:#d0d4dc;"></div>
<div class="b" style="left:1051px;top:797px;width:1px;height:21px;background:#d0d4dc;"></div>
<span class="t" style="left:97.80px;top:801px;letter-spacing:-0.144px;color:#1c1c22;">28170001</span>
<span class="t" style="left:221.60px;top:801px;letter-spacing:-0.150px;color:#1c1c22;">Amortización acumulada de equipos para pr...</span>
<span class="t" style="left:524.40px;top:801px;letter-spacing:0.071px;color:#1c1c22;">1.125,00</span>
<span class="t" style="left:669.60px;top:801px;letter-spacing:0.195px;color:#1c1c22;">0,00</span>
<span class="t" style="left:699.40px;top:801px;letter-spacing:-0.199px;color:#1c1c22;">Baja del inmovilizado Ordenador despacho</span>
<svg style="left:982px;top:800px" width="13" height="13" viewBox="0 0 13 13"><circle cx="6.5" cy="6.5" r="6" fill="#fff" stroke="#8792a2" stroke-width="1.1"/><circle cx="6.5" cy="6.5" r="4.1" fill="#e9e9eb" stroke="#b3b7bd" stroke-width="0.9"/></svg>
<svg style="left:84px;top:761px" width="5" height="9" viewBox="0 0 5 9"><path d="M0.5 0.5V8.5L4.8 4.5Z" fill="#6d717a"/></svg>
<div class="b" style="left:78px;top:838px;width:988px;height:24px;background:linear-gradient(#f4f5f7,#eceef2);border-top:1px solid #a9aeb7;"></div>
<span class="t" style="left:524.40px;top:845px;letter-spacing:0.071px;color:#3c3d45;">3.000,00</span>
<div class="b" style="left:570px;top:844px;width:1px;height:15px;background:#b0b4bc;"></div>
<span class="t" style="left:648.40px;top:845px;letter-spacing:0.071px;color:#3c3d45;">3.000,00</span>
<div class="b" style="left:694px;top:844px;width:1px;height:15px;background:#b0b4bc;"></div>
<div class="b" style="left:78px;top:862px;width:220px;height:17px;background:linear-gradient(#f0f2f5,#f6f7f9);"></div>
<div class="b" style="left:298px;top:862px;width:768px;height:17px;background:linear-gradient(#eceef1,#ffffff 70%);"></div>
<div class="b" style="left:110px;top:863px;width:83px;height:16px;background:#fff;"></div>
<span class="t" style="left:114.00px;top:865px;letter-spacing:-0.081px;color:#1c1c22;">Registro 1 de 3</span>
<svg style="left:77px;top:866px" width="990" height="10" viewBox="0 0 990 10"><path d="M4.6 1V9" stroke="#a9adb3" stroke-width="1.3"/><path d="M9.4 1V9L5.4 5ZM13.6 1V9L9.6 5Z" fill="#a9adb3"/>
<path d="M26.8 1V9L22.4 5Z" fill="#a9adb3"/>
<path d="M121.4 1V9L126 5Z" fill="#5c6068"/>
<path d="M133.6 1V9L137.6 5ZM137.8 1V9L141.8 5Z" fill="#5c6068"/><path d="M142.9 1V9" stroke="#5c6068" stroke-width="1.3"/>
<path d="M148.8 5H157.8M153.3 0.5V9.5" stroke="#8b8f96" stroke-width="1.8"/>
<path d="M163.8 5H173.4" stroke="#8b8f96" stroke-width="1.8"/>
<path d="M179.5 7L183.4 2.6L187.3 7Z" fill="#8b8f96"/>
<path d="M194 5.2L197 8L203 1.6" stroke="#8b8f96" stroke-width="2" fill="none"/>
<path d="M209.2 1L217.6 9M217.6 1L209.2 9" stroke="#777b83" stroke-width="2.2" fill="none"/>
<path d="M232 0.5V9.5L227.4 5Z" fill="#c9ccd1"/>
<path d="M979 0.5V9.5L983.6 5Z" fill="#bcbfc5"/></svg>
<svg style="left:1071.5px;top:776.5px" width="23" height="21" viewBox="0 0 23 21"><defs><linearGradient id="g24" x1="0" y1="0" x2="0" y2="1"><stop offset="0" stop-color="#c4c4c4"/><stop offset="1" stop-color="#a6a6a6"/></linearGradient></defs>
<rect x="0.5" y="0.5" width="22" height="20" rx="3" fill="#eef1f4" stroke="#d6dae0"/>
<path d="M11.5 4L17.6 10.6H14.6V17H8.4V10.6H5.4Z" fill="url(#g24)"/></svg>
<svg style="left:1071.5px;top:802.5px" width="23" height="21" viewBox="0 0 23 21"><defs><linearGradient id="g25" x1="0" y1="0" x2="0" y2="1"><stop offset="0" stop-color="#c4c4c4"/><stop offset="1" stop-color="#a6a6a6"/></linearGradient></defs>
<rect x="0.5" y="0.5" width="22" height="20" rx="3" fill="#eef1f4" stroke="#d6dae0"/>
<path d="M11.5 17L17.6 10.4H14.6V4H8.4V10.4H5.4Z" fill="url(#g25)"/></svg>
<svg style="left:1094px;top:903px" width="11" height="11" viewBox="0 0 11 11"><rect x="9" y="1" width="2" height="2" fill="#e9ebee"/><rect x="8" y="0" width="2" height="2" fill="#8a8e96"/><rect x="5" y="5" width="2" height="2" fill="#e9ebee"/><rect x="4" y="4" width="2" height="2" fill="#8a8e96"/><rect x="9" y="5" width="2" height="2" fill="#e9ebee"/><rect x="8" y="4" width="2" height="2" fill="#8a8e96"/><rect x="1" y="9" width="2" height="2" fill="#e9ebee"/><rect x="0" y="8" width="2" height="2" fill="#8a8e96"/><rect x="5" y="9" width="2" height="2" fill="#e9ebee"/><rect x="4" y="8" width="2" height="2" fill="#8a8e96"/><rect x="9" y="9" width="2" height="2" fill="#e9ebee"/><rect x="8" y="8" width="2" height="2" fill="#8a8e96"/></svg>
</section>
<svg style="left:0;top:0" width="1115" height="925"><path d="M295.6 122L420.6 392.4" stroke="#fb0007" stroke-width="1.9" fill="none"/><path d="M423.4 398.6L415.5 391.2L422.8 387.8Z" fill="#fb0007"/></svg>
</body></html>
